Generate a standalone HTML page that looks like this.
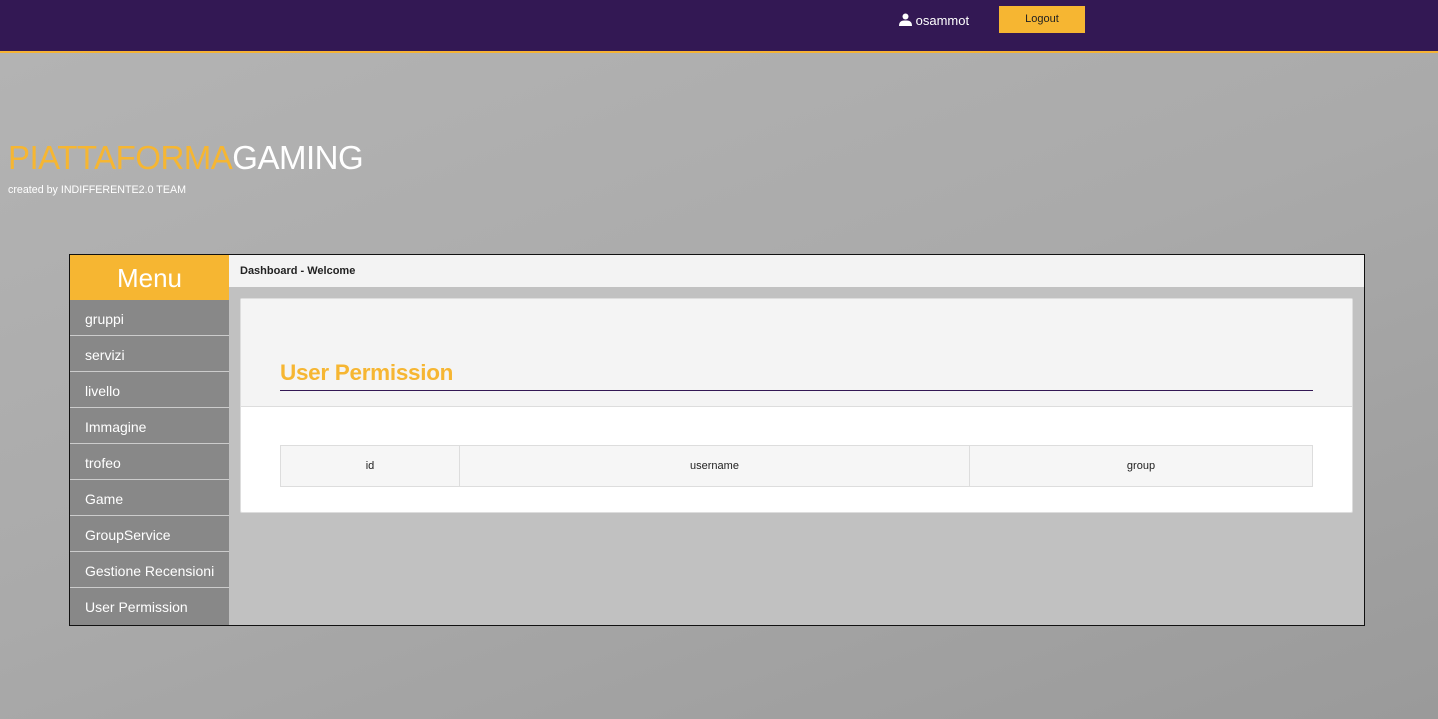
<!DOCTYPE html>
<html><head><style>
*{margin:0;padding:0;box-sizing:border-box}
body{width:1438px;height:719px;overflow:hidden;font-family:"Liberation Sans",sans-serif;background:linear-gradient(160deg,#b4b4b4 0%,#aaaaaa 50%,#9a9a9a 100%);position:relative}
.top{position:absolute;left:0;top:0;width:1438px;height:53px;background:#331854;border-bottom:2px solid #f5b335}
.user{position:absolute;left:899px;top:13px;color:#fff;font-size:13px}
.logout{position:absolute;left:999px;top:6px;width:86px;height:27px;background:#f6b632;font-size:11px;color:#222;text-align:center;line-height:27px}
.title{position:absolute;left:8px;top:139px;font-size:33px;color:#fff;letter-spacing:-0.5px}
.title span{color:#f6b632}
.sub{position:absolute;left:8px;top:184px;font-size:10.7px;color:#fff}
.box{position:absolute;left:69px;top:254px;width:1296px;height:372px;border:1px solid #111;background:#c1c1c1}
.menu{position:absolute;left:0;top:0;width:159px;height:370px;background:#888}
.mh{height:45px;background:#f6b632;color:#fff;font-size:26px;text-align:center;line-height:46px}
.mi{height:36px;border-bottom:1px solid #ccc;color:#fff;font-size:14px;padding-left:15px;line-height:38px}
.bc{position:absolute;left:159px;top:0;right:0;height:32px;background:#f3f3f3;font-size:11px;font-weight:bold;color:#222;padding-left:11px;line-height:33px}
.card{position:absolute;left:170px;top:43px;width:1113px;height:215px;background:#fff;border:1px solid #ddd;border-radius:2px}
.ch{height:108px;background:#f4f4f4;border-bottom:1px solid #ddd;position:relative}
.ch h2{position:absolute;left:39px;top:61px;font-size:22.5px;font-weight:bold;color:#f6b632;width:1033px;border-bottom:1px solid #331854;padding-bottom:4px;letter-spacing:-0.3px}
table{position:absolute;left:39px;top:146px;width:1033px;border-collapse:collapse;font-size:11px;color:#222}
td{border:1px solid #ddd;background:#f6f6f6;height:41px;text-align:center}
</style></head><body>
<div class="top">
<div class="user"><svg width="13" height="13" viewBox="0 0 13 13" style="vertical-align:-1px"><circle cx="6.5" cy="3.5" r="3" fill="#fff"/><path d="M0 13 C0 8 3 7.5 6.5 7.5 S13 8 13 13Z" fill="#fff"/></svg> osammot</div>
<div class="logout">Logout</div>
</div>
<div class="title"><span>PIATTAFORMA</span>GAMING</div>
<div class="sub">created by INDIFFERENTE2.0 TEAM</div>
<div class="box">
<div class="menu"><div class="mh">Menu</div>
<div class="mi">gruppi</div><div class="mi">servizi</div><div class="mi">livello</div><div class="mi">Immagine</div><div class="mi">trofeo</div><div class="mi">Game</div><div class="mi">GroupService</div><div class="mi">Gestione Recensioni</div><div class="mi" style="border:none">User Permission</div></div>
<div class="bc">Dashboard - Welcome</div>
<div class="card"><div class="ch"><h2>User Permission</h2></div>
<table><tr><td style="width:179px">id</td><td style="width:510px">username</td><td>group</td></tr></table></div>
</div>
</body></html>
